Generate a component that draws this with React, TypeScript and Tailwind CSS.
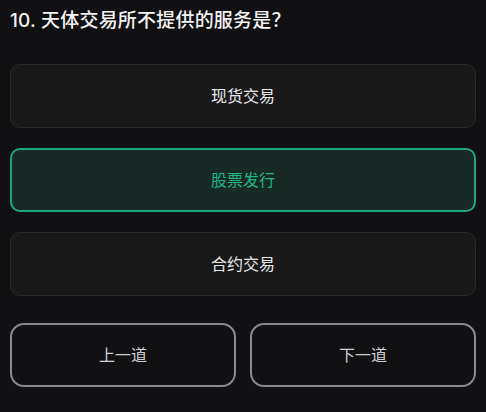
import { useState } from 'react';

const options = ['现货交易', '股票发行', '合约交易'];

export default function App() {
  const [selected, setSelected] = useState(1);

  return (
    <div className="min-h-screen bg-[#111114] px-[10px] pt-[7px] font-['Inter','Noto_Sans_CJK_SC',sans-serif] text-white">
      <h1 className="text-[19px] leading-[28px] font-medium tracking-[0.2px] text-[#f2f2f2]">10. 天体交易所不提供的服务是？</h1>

      <div className="mt-[29px] flex flex-col gap-[20px]">
        {options.map((opt, i) => (
          <button
            key={opt}
            onClick={() => setSelected(i)}
            className={
              i === selected
                ? 'h-[64px] rounded-[10px] border-2 border-[#1fa67a] bg-[#172a26] text-[16px] text-[#22b584]'
                : 'h-[64px] rounded-[10px] border border-[#2a2a2d] bg-[#19191a] text-[16px] text-[#e8e8e8]'
            }
          >
            {opt}
          </button>
        ))}
      </div>

      <div className="mt-[27px] grid grid-cols-2 gap-[14px]">
        <button className="h-[64px] rounded-[14px] border-2 border-[#8a8a8c] text-[16px] text-[#cfcfcf]">上一道</button>
        <button className="h-[64px] rounded-[14px] border-2 border-[#8a8a8c] text-[16px] text-[#cfcfcf]">下一道</button>
      </div>
    </div>
  );
}
